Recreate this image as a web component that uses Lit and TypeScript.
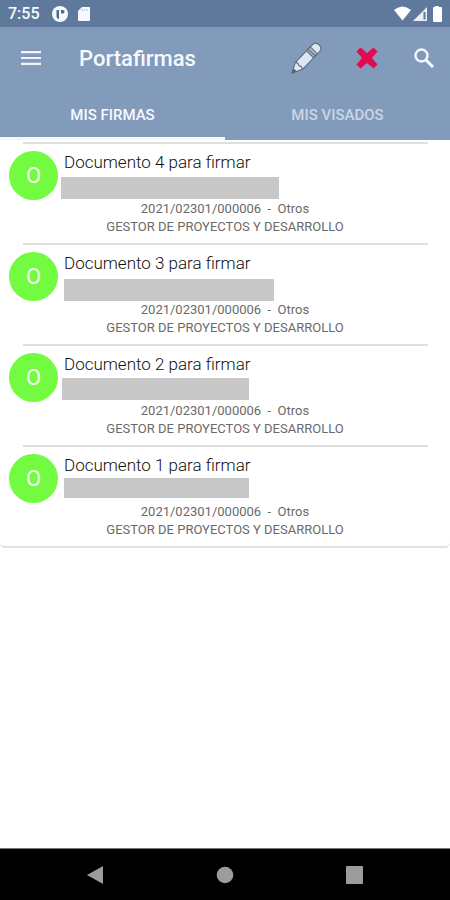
import { LitElement, html, css } from "lit";
import { customElement, state } from "lit/decorators.js";
import { classMap } from "lit/directives/class-map.js";

interface Doc {
  title: string;
  /* redacted line: left inset, top gap, width and height */
  inset: number;
  gap: number;
  width: number;
  height: number;
}

const DOCS: Doc[] = [
  { title: "Documento 4 para firmar", inset: 0, gap: 5, width: 218, height: 22 },
  { title: "Documento 3 para firmar", inset: 3, gap: 6, width: 210, height: 22 },
  { title: "Documento 2 para firmar", inset: 1, gap: 4, width: 187, height: 22 },
  { title: "Documento 1 para firmar", inset: 3, gap: 3, width: 185, height: 20 },
];

@customElement("app-root")
export class AppRoot extends LitElement {
  static styles = css`
    :host {
      display: flex;
      flex-direction: column;
      min-height: 100vh;
      background: #fff;
      font-family: Roboto, "Liberation Sans", sans-serif;
      color: #111;
    }
    button {
      font: inherit;
      color: inherit;
      background: none;
      border: 0;
      padding: 0;
      display: flex;
      align-items: center;
      justify-content: center;
      cursor: pointer;
    }
    svg {
      display: block;
    }
    .status {
      display: flex;
      align-items: center;
      height: 27px;
      padding: 0 8px;
      background: #5f799c;
      color: #f6f9fd;
      font-size: 16px;
      font-weight: 500;
    }
    .clock {
      margin-right: 12px;
    }
    .card-icon {
      margin-left: 9px;
    }
    .signals {
      display: flex;
      align-items: center;
      gap: 2px;
      margin-left: auto;
      margin-right: -2px;
    }
    .header {
      background: #829bbb;
      color: #f6f9fd;
    }
    .bar {
      display: flex;
      align-items: center;
      height: 62px;
      padding: 0 12px;
    }
    .bar h1 {
      flex: 1;
      margin: 0 0 0 29px;
      font-size: 22px;
      font-weight: 500;
    }
    .icon {
      width: 38px;
      height: 38px;
    }
    .actions {
      display: flex;
      gap: 22px;
      margin-right: -5px;
    }
    .actions .icon:last-child {
      margin-left: -3px;
    }
    .tabs {
      display: flex;
      height: 51px;
    }
    .tab {
      flex: 1;
      border-top: 3px solid transparent;
      border-bottom: 3px solid transparent;
      font-size: 15px;
      font-weight: 500;
      color: #c9d6e6;
    }
    .tab.active {
      color: #f6f9fd;
      border-bottom-color: #f4f7f8;
    }
    .list {
      list-style: none;
      margin: 0;
      padding: 2px 0 0;
      border-bottom: 2px solid #e2e2e2;
      border-radius: 0 0 5px 5px;
    }
    .row {
      display: grid;
      grid-template-columns: 49px 1fr;
      grid-template-rows: 58px auto;
      column-gap: 3px;
      height: 101px;
      box-sizing: border-box;
      padding: 0 9px;
    }
    .row::before {
      content: "";
      grid-column: 1 / -1;
      grid-row: 1;
      height: 2px;
      margin: 0 13px 0 14px;
      background: #dfdfdf;
    }
    .avatar {
      grid-column: 1;
      grid-row: 1;
      align-self: end;
      display: flex;
      align-items: center;
      justify-content: center;
      width: 49px;
      height: 49px;
      border-radius: 50%;
      background: #72fb40;
      color: #f4fff0;
      font-size: 22px;
    }
    .body {
      grid-column: 2;
      grid-row: 1;
      padding-top: 10px;
    }
    .title {
      margin: 0 0 0 3px;
      font-size: 17px;
      font-weight: 300;
      line-height: 20px;
    }
    .redacted {
      background: #c8c8c8;
    }
    .meta {
      grid-column: 1 / -1;
      margin: 0;
      text-align: center;
      font-size: 13px;
      line-height: 18px;
      color: #6a6a6a;
    }
    .nav {
      display: flex;
      align-items: center;
      justify-content: space-around;
      height: 51px;
      margin-top: auto;
      padding: 0 30px;
      border-top: 1px solid #777;
      background: #000;
    }
  `;

  @state() private tab = 0;

  private renderTab(label: string, index: number) {
    const active = this.tab === index;
    return html`<button
      role="tab"
      aria-selected=${active}
      class=${classMap({ tab: true, active })}
      @click=${() => (this.tab = index)}
    >${label}</button>`;
  }

  render() {
    return html`
      <div class="status">
        <span class="clock">7:55</span>
        <svg width="16" height="16" viewBox="0 0 16 16">
          <circle cx="8" cy="8" r="8" fill="#f6f9fd" />
          <path d="M4.500 4v6q0 3 2.500 3V4zM9 4h2q1.500 0 1.500 1.700T11 7.500H9z" fill="#4f6a8e" />
        </svg>
        <svg class="card-icon" width="14" height="16" viewBox="0 0 14 16">
          <path d="M5 1h7q1 0 1 1v12q0 1-1 1H2q-1 0-1-1V5z" fill="#f6f9fd" />
          <path d="M5 3v2M7.500 3v2M10 3v2" stroke="#b9c7d9" />
        </svg>
        <div class="signals">
          <svg width="17" height="15" viewBox="0 0 17 15">
            <path d="M0 4Q8.500-3 17 4L8.500 14.500z" fill="#fff" />
          </svg>
          <svg width="15" height="16" viewBox="0 0 15 16">
            <path d="M14 1V15H0z" fill="#e9eff6" />
            <path d="M10.500 6h2v7.500h-2z" fill="#5f799c" />
          </svg>
          <svg width="14" height="16" viewBox="0 0 14 16">
            <path d="M5 0h4v1h2q1 0 1 1v13q0 1-1 1H4q-1 0-1-1V2q0-1 1-1h1z" fill="#fff" />
          </svg>
        </div>
      </div>

      <header class="header">
        <div class="bar">
          <button class="icon" aria-label="Menú">
            <svg width="20" height="14" viewBox="0 0 20 14">
              <path d="M0 1.200h20M0 7h20M0 12.800h20" stroke="#f0f5fc" stroke-width="2.200" />
            </svg>
          </button>
          <h1>Portafirmas</h1>
          <div class="actions">
            <button class="icon" aria-label="Firmar">
              <svg width="32" height="32" viewBox="0 0 32 32">
                <g transform="translate(1 31) rotate(-46)" stroke="#5b6675" stroke-linejoin="round">
                  <path d="M0 0L10-5H34Q39-5 39 0T34 5H10z" fill="#dbe8f4" />
                  <path d="M10-5q2 2.500 0 5q2 2.500 0 5" fill="none" />
                  <path d="M26-5h5.500V5H26z" fill="#a9b8ca" />
                  <path d="M28.500-5V5" />
                  <path d="M0 0L4-1.800V1.800z" fill="#5b6675" />
                </g>
              </svg>
            </button>
            <button class="icon" aria-label="Rechazar">
              <svg width="22" height="22" viewBox="0 0 22 22">
                <path d="M4.500 0.500L11 6 17.500 0.500 21.500 4.500 16 11 21.500 17.500 17.500 21.500 11 16 4.500 21.500 0.500 17.500 6 11 0.500 4.500z" fill="#e30b50" />
              </svg>
            </button>
            <button class="icon" aria-label="Buscar">
              <svg width="20" height="20" viewBox="0 0 20 20" fill="none" stroke="#f6f9fd">
                <circle cx="7.500" cy="7.500" r="6" stroke-width="2.400" />
                <path d="M12 12l7 7" stroke-width="3" />
              </svg>
            </button>
          </div>
        </div>
        <div class="tabs" role="tablist">
          ${this.renderTab("MIS FIRMAS", 0)}${this.renderTab("MIS VISADOS", 1)}
        </div>
      </header>

      <ul class="list">
        ${DOCS.map(
          (d) => html`<li class="row">
            <span class="avatar">O</span>
            <div class="body">
              <h2 class="title">${d.title}</h2>
              <div
                class="redacted"
                style="width:${d.width}px;height:${d.height}px;margin:${d.gap}px 0 0 ${d.inset}px"
              ></div>
            </div>
            <p class="meta">2021/02301/000006&nbsp; - &nbsp;Otros<br />GESTOR DE PROYECTOS Y DESARROLLO</p>
          </li>`
        )}
      </ul>

      <nav class="nav">
        <button class="icon" aria-label="Atrás">
          <svg width="17" height="20" viewBox="0 0 17 20"><path d="M0 10L16 1V19z" fill="#9c9c9c" /></svg>
        </button>
        <button class="icon" aria-label="Inicio">
          <svg width="18" height="18" viewBox="0 0 18 18"><circle cx="9" cy="9" r="8.300" fill="#9c9c9c" /></svg>
        </button>
        <button class="icon" aria-label="Recientes">
          <svg width="18" height="18" viewBox="0 0 18 18"><rect width="17" height="18" rx="1" fill="#9c9c9c" /></svg>
        </button>
      </nav>
    `;
  }
}
